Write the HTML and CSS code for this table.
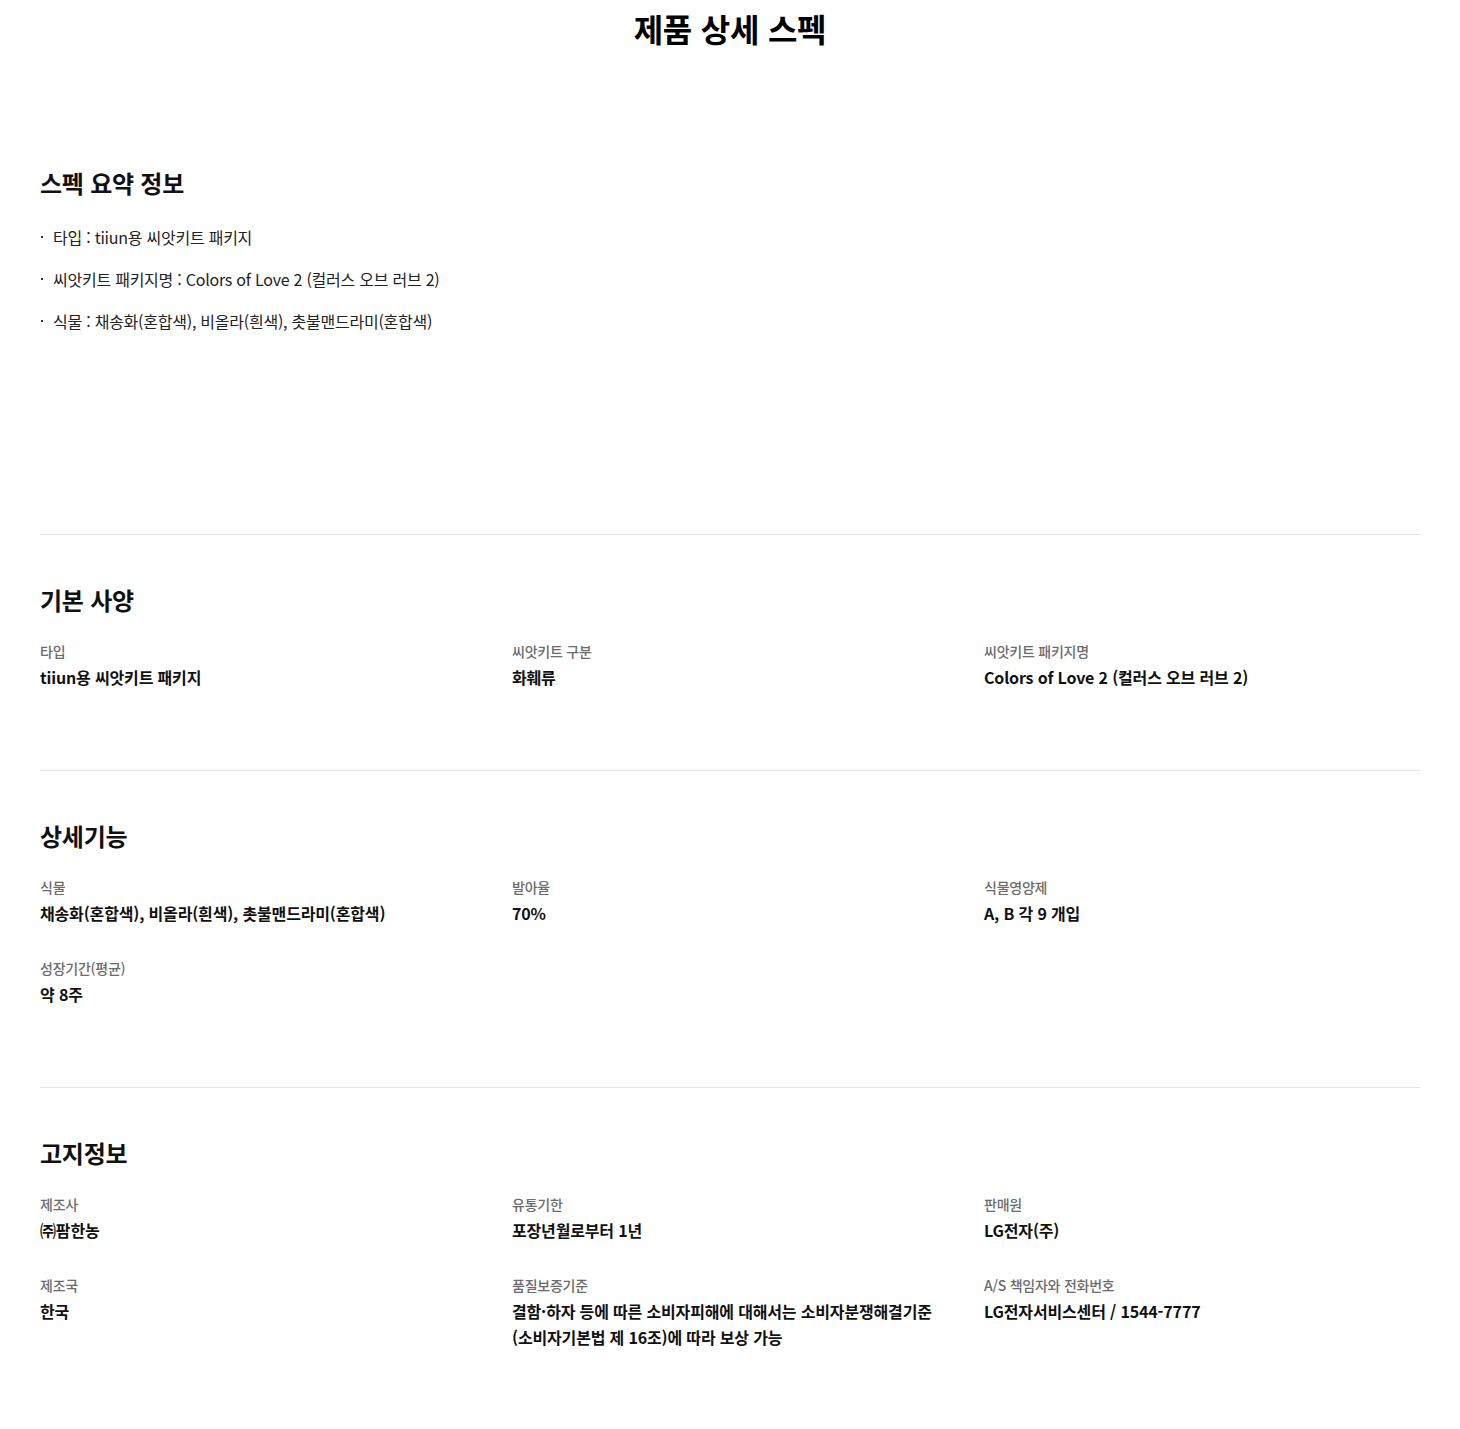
FILE: index.html
```html
<!DOCTYPE html>
<html lang="ko">
<head>
  <meta charset="UTF-8" />
  <meta name="viewport" content="width=device-width, initial-scale=1.0"/>
  <title>제품 상세 스펙</title>
  <link rel="stylesheet" href="styles.css">
</head>
<body>
  <div class="page">
    <h1 class="title">제품 상세 스펙</h1>

    <!-- 스펙 요약 -->
    <section class="summary">
      <h2 class="sec-title">스펙 요약 정보</h2>
      <ul class="bullets">
        <li>타입 : tiiun용 씨앗키트 패키지</li>
        <li>씨앗키트 패키지명 : Colors of Love 2 (컬러스 오브 러브 2)</li>
        <li>식물 : 채송화(혼합색), 비올라(흰색), 촛불맨드라미(혼합색)</li>
      </ul>
    </section>

    <!-- 기본 사양 -->
    <section class="spec">
      <h2 class="sec-title">기본 사양</h2>
      <dl class="spec-grid">
        <div class="item"><dt>타입</dt><dd>tiiun용 씨앗키트 패키지</dd></div>
        <div class="item"><dt>씨앗키트 구분</dt><dd>화훼류</dd></div>
        <div class="item"><dt>씨앗키트 패키지명</dt><dd>Colors of Love 2 (컬러스 오브 러브 2)</dd></div>
      </dl>
    </section>

    <!-- 상세기능 -->
    <section class="spec">
      <h2 class="sec-title">상세기능</h2>
      <dl class="spec-grid">
        <div class="item"><dt>식물</dt><dd>채송화(혼합색), 비올라(흰색), 촛불맨드라미(혼합색)</dd></div>
        <div class="item"><dt>발아율</dt><dd>70%</dd></div>
        <div class="item"><dt>식물영양제</dt><dd>A, B 각 9 개입</dd></div>
        <div class="item"><dt>성장기간(평균)</dt><dd>약 8주</dd></div>
      </dl>
    </section>

    <!-- 고지정보 -->
    <section class="spec">
      <h2 class="sec-title">고지정보</h2>
      <dl class="spec-grid">
        <div class="item"><dt>제조사</dt><dd>㈜팜한농</dd></div>
        <div class="item"><dt>유통기한</dt><dd>포장년월로부터 1년</dd></div>
        <div class="item"><dt>판매원</dt><dd>LG전자(주)</dd></div>
        <div class="item"><dt>제조국</dt><dd>한국</dd></div>
        <div class="item"><dt>품질보증기준</dt><dd>결함·하자 등에 따른 소비자피해에 대해서는 소비자분쟁해결기준 (소비자기본법 제 16조)에 따라 보상 가능</dd></div>
        <div class="item"><dt>A/S 책임자와 전화번호</dt><dd>LG전자서비스센터 / 1544-7777</dd></div>
      </dl>
    </section>
  </div>
</body>
</html>
```

FILE: styles.css
```css
body {
  margin: 0;
  background-color: #fff;
  font-family: "Noto Sans CJK KR", "Noto Sans", sans-serif;
  color: #111;
  letter-spacing: -0.015em;
}

.page {
  padding: 0 40px;
}

.title {
  margin: 4px 0 0;
  font-size: 32px;
  line-height: 48px;
  font-weight: 700;
  text-align: center;
  color: #000;
}

.sec-title {
  margin: 0;
  font-size: 24px;
  line-height: 34px;
  font-weight: 700;
  color: #111;
}

/* summary */
.summary {
  padding: 114px 0 200px;
}

.bullets {
  list-style: none;
  margin: 24px 0 0;
  padding: 0;
}

.bullets li {
  position: relative;
  padding-left: 13px;
  font-size: 16px;
  line-height: 26px;
  color: #222;
  margin-bottom: 16px;
}

.bullets li:last-child {
  margin-bottom: 0;
}

.bullets li::before {
  content: "";
  position: absolute;
  left: 1px;
  top: 12px;
  width: 2px;
  height: 2px;
  background-color: #333;
}

/* spec blocks */
.spec {
  border-top: 1px solid #e4e4e4;
  padding: 48px 0 80px;
}

.spec-grid {
  display: grid;
  grid-template-columns: repeat(3, 1fr);
  column-gap: 36px;
  row-gap: 32px;
  margin: 24px 0 0;
}

.item dt {
  font-size: 14px;
  line-height: 20px;
  font-weight: 500;
  color: #6b6b6b;
}

.item dd {
  margin: 3px 0 0;
  font-size: 16px;
  line-height: 26px;
  font-weight: 700;
  color: #111;
  letter-spacing: -0.01em;
}
```
